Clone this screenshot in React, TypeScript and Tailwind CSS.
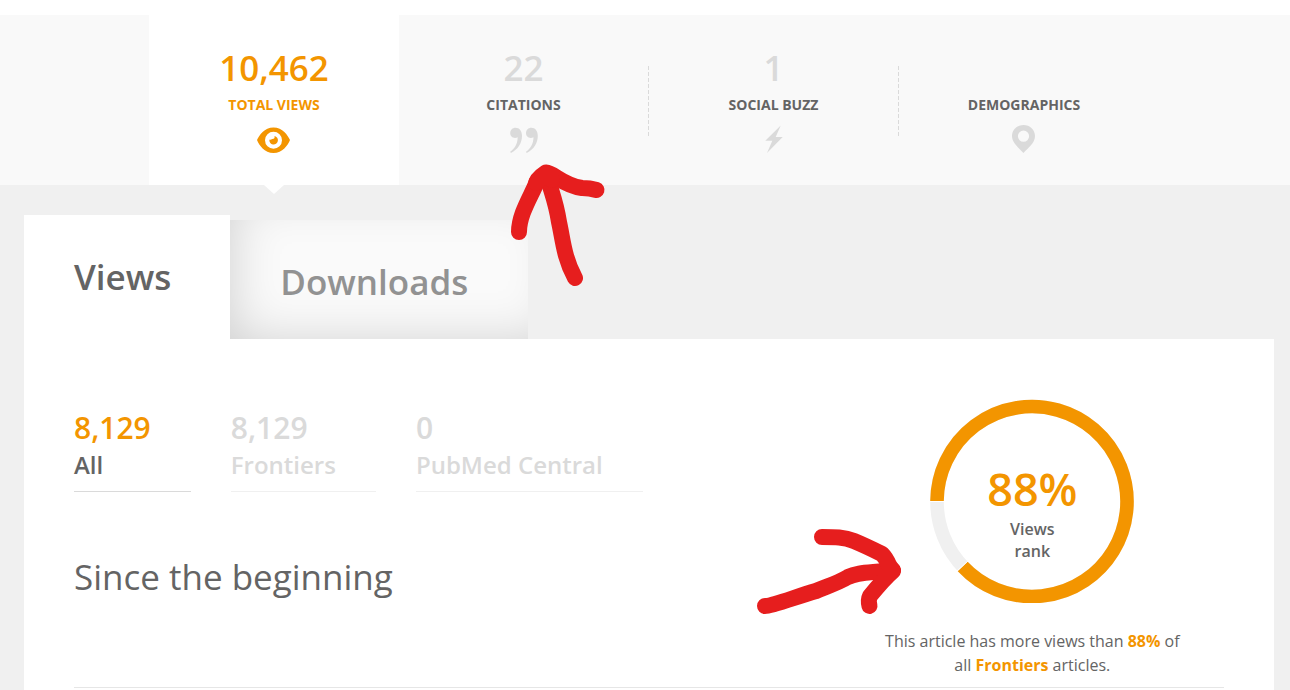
import type { ReactNode } from "react";

function EyeIcon() {
  return (
    <svg viewBox="0 0 34 26" className="h-[26px] w-[34px]" fill="currentColor" aria-hidden="true">
      <path
        fillRule="evenodd"
        d="M16.500 .500C25.500 .500 31 8.500 33 13C31 18 25.500 26 16.500 26C7.500 26 2 18 0 13C2 8.500 7.500 .500 16.500 .500ZM16.500 4.700A8.500 8.500 0 1 0 16.500 21.700A8.500 8.500 0 1 0 16.500 4.700Z"
      />
      <path d="M17.500 9A2.500 2.500 0 0 1 15.300 12.100Q13.300 13.100 12.400 12.500A4.300 4.300 0 1 0 17.500 9Z" />
    </svg>
  );
}

function QuoteIcon() {
  return (
    <svg viewBox="0 0 28 26" className="h-[26px] w-7" fill="currentColor" aria-hidden="true">
      <path d="M5.500 .800C9.500 .800 12 4 12 9C12 16 8 22.500 .900 26L.200 24.800C4.800 21.500 7.500 17 7.700 10.300C4 12.300 .200 9.800 .200 6.300C.200 3 2.600 .800 5.500 .800Z" />
      <path d="M21.300 .800C25.300 .800 27.800 4 27.800 9C27.800 16 23.800 22.500 16.700 26L16 24.800C20.600 21.500 23.300 17 23.500 10.300C19.800 12.300 16 9.800 16 6.300C16 3 18.400 .800 21.300 .800Z" />
    </svg>
  );
}

function BoltIcon() {
  return (
    <svg viewBox="0 0 18 28" className="h-7 w-[18px]" fill="currentColor" aria-hidden="true">
      <path d="M15.700 .500L.300 15.700H7.300L2 28L17.700 12.100H10.700Z" />
    </svg>
  );
}

function PinIcon() {
  return (
    <svg viewBox="0 0 24 28" className="h-7 w-6" fill="currentColor" aria-hidden="true">
      <path
        fillRule="evenodd"
        d="M11.500 0C17.900 0 23 4.800 23 11C23 18 16 23 11.500 28C7 23 0 18 0 11C0 4.800 5.100 0 11.500 0ZM11.500 5.600A5.600 5.600 0 1 0 11.500 16.800A5.600 5.600 0 1 0 11.500 5.600Z"
      />
    </svg>
  );
}

type Metric = { value: string; label: string; icon: ReactNode; active?: boolean; divider?: boolean };

const metrics: Metric[] = [
  { value: "10,462", label: "TOTAL VIEWS", icon: <EyeIcon />, active: true },
  { value: "22", label: "CITATIONS", icon: <QuoteIcon />, divider: true },
  { value: "1", label: "SOCIAL BUZZ", icon: <BoltIcon />, divider: true },
  { value: "", label: "DEMOGRAPHICS", icon: <PinIcon /> },
];

const sources = [
  { value: "8,129", label: "All", active: true },
  { value: "8,129", label: "Frontiers", active: false },
  { value: "0", label: "PubMed Central", active: false },
];

function MetricTab({ value, label, icon, active, divider }: Metric) {
  return (
    <li className={active ? "relative flex flex-1 bg-white" : "flex flex-1"}>
      <button
        type="button"
        className={`flex h-[170px] flex-1 flex-col items-center pt-[33px] ${active ? "text-[#f39500]" : "text-[#dadada]"}`}
      >
        <span className="h-10 text-[35px] leading-10 font-semibold">{value}</span>
        <span className={`mt-[7px] text-sm leading-5 font-bold ${active ? "" : "text-[#646464]"}`}>{label}</span>
        <span className="mt-2.5 flex h-7 items-end">{icon}</span>
      </button>
      {divider && (
        <span className="mt-[51px] h-[70px] w-px bg-[repeating-linear-gradient(to_bottom,#dadada_0px,#dadada_4px,transparent_4px,transparent_6px)]" />
      )}
      {active && (
        <svg viewBox="0 0 20 9" className="absolute top-full left-1/2 h-[9px] w-5 -translate-x-1/2" aria-hidden="true">
          <path d="M0 0H20L10 9Z" fill="#fff" />
        </svg>
      )}
    </li>
  );
}

function RankChart() {
  return (
    <div className="grid size-[204px] place-items-center">
      <svg viewBox="0 0 204 204" className="col-start-1 row-start-1 size-[204px]" fill="none" aria-hidden="true">
        <circle cx="102" cy="102.500" r="95" stroke="#f0f0f0" strokeWidth="13.600" />
        <path d="M7 102A95 95 0 1 1 32.700 167.500" stroke="#f39500" strokeWidth="13.600" />
        <path d="M0 102.500H15M27 172L38 162" stroke="#fff" strokeWidth="1" />
      </svg>
      <div className="col-start-1 row-start-1 pt-5 text-center font-semibold">
        <div className="text-[45px] leading-[58px] text-[#f39500]">88%</div>
        <div className="text-base leading-[22px] text-[#646464]">
          Views
          <br />
          rank
        </div>
      </div>
    </div>
  );
}

function Arrows() {
  return (
    <>
      <svg
        viewBox="0 0 100 130"
        className="pointer-events-none absolute top-[160px] left-[508px] h-[130px] w-[100px]"
        fill="none"
        stroke="#e61e1e"
        strokeWidth="16"
        strokeLinecap="round"
        strokeLinejoin="round"
        aria-hidden="true"
      >
        <path d="M11 72C11 55 22 38 28 24Q28 19 38 12.500C46 13 54 25 74 28Q82 28 88.500 30" />
        <path d="M38 13C45 37 48 42 51 62C55 80 56 98 67 118" />
        <path d="M28 23L38 14L44 20" />
      </svg>
      <svg
        viewBox="0 0 150 90"
        className="pointer-events-none absolute top-[527px] left-[755px] h-[90px] w-[150px]"
        fill="none"
        stroke="#e61e1e"
        strokeWidth="16"
        strokeLinecap="round"
        strokeLinejoin="round"
        aria-hidden="true"
      >
        <path d="M10 79C18 79 40 70 61 64C73 59 83 56 93 50C103 45 116 46 138 43" />
        <path d="M67 10C80 10 89 10 99 14Q111 19 127 27Q131 31 134 38L138 44C130 51 124 58 115 69Q113 73 114.500 79" />
      </svg>
    </>
  );
}

export default function App() {
  return (
    <div className="relative flex min-h-screen flex-col overflow-hidden bg-[#f0f0f0] font-['Open_Sans','Noto_Sans',sans-serif] text-[#646464]">
      <header className="bg-white pt-[15px]">
        <nav className="bg-[#f9f9f9] pl-2" aria-label="Article impact">
          <ul className="mx-auto flex max-w-[1000px]">
            {metrics.map((metric) => (
              <MetricTab key={metric.label} {...metric} />
            ))}
          </ul>
        </nav>
      </header>

      <main className="flex flex-1 flex-col pt-[30px] pl-2">
        <div className="mx-auto flex w-full max-w-[1250px] flex-1 flex-col">
          <div className="flex items-end">
            <button type="button" className="h-[124px] bg-white pr-[59px] pl-[50px] text-[35px] font-semibold">
              Views
            </button>
            <button
              type="button"
              className="h-[119px] bg-[#fafafa] pt-1.5 pr-[60px] pl-[50px] text-[35px] font-semibold text-[#929292] shadow-[inset_16px_-12px_50px_-14px_rgba(0,0,0,0.17)]"
            >
              Downloads
            </button>
          </div>

          <div className="flex-1 bg-white px-[50px]">
            <div className="grid grid-cols-3">
              <section className="col-span-2 pt-[68px]">
                <ul className="flex gap-10">
                  {sources.map(({ value, label, active }) => (
                    <li key={label} className={`border-b ${active ? "border-[#dadada]" : "border-[#f0f0f0]"}`}>
                      <button
                        type="button"
                        className={`block pr-10 pb-2.5 text-left font-semibold ${active ? "text-[#646464]" : "text-[#dadada]"}`}
                      >
                        <span className={`block text-[30px] leading-[42px] ${active ? "text-[#f39500]" : ""}`}>
                          {value}
                        </span>
                        <span className="block text-2xl leading-8">{label}</span>
                      </button>
                    </li>
                  ))}
                </ul>
                <h2 className="mt-[61px] text-[35px] leading-[48px]">Since the beginning</h2>
              </section>

              <aside className="flex flex-col items-center pt-[60px] pb-2.5">
                <RankChart />
                <p className="mt-[26px] max-w-[310px] text-center text-base leading-6">
                  This article has more views than <strong className="text-[#f39500]">88%</strong> of all{" "}
                  <strong className="text-[#f39500]">Frontiers</strong> articles.
                </p>
              </aside>
            </div>
            <hr className="border-[#e6e6e6]" />
          </div>
        </div>
      </main>
      <Arrows />
    </div>
  );
}
